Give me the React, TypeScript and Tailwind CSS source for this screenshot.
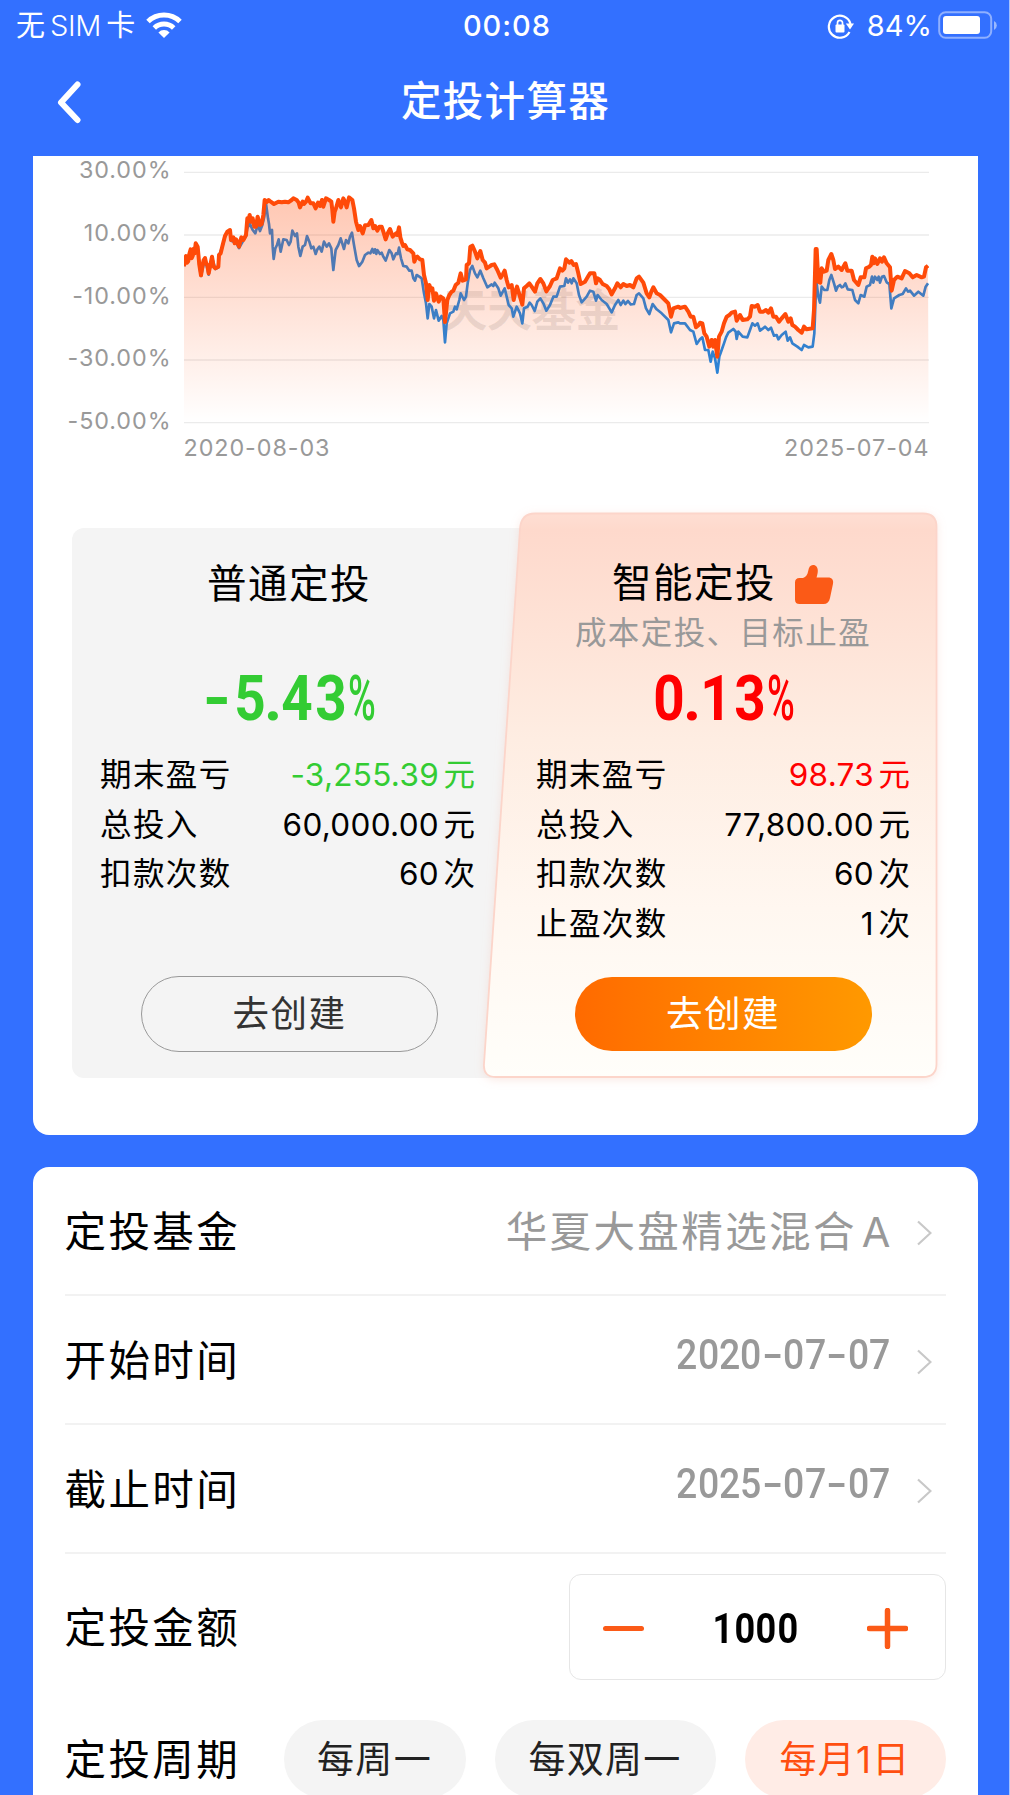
import React from 'react';

type Segment = { dx: number; points: string };

const GRID_LINES = [67, 255, 442, 630, 818];
const Y_LABELS = ['30.00%', '10.00%', '-10.00%', '-30.00%', '-50.00%'];

const SMART_LINE: Segment[] = [
  {
    dx: -462,
    points:
      '462,349 465,325 468,318 471,338 475,333 478,312 482,298 485,325 488,318 491,296 494,310 497,280 503,290 508,345 513,376 518,345 521,330 525,324 529,342 532,345 536,370 541,345 546,320 551,350 556,355 565,350 567,315 572,310 578,285 585,258 592,245 600,240 603,270 610,262 614,280 618,268 622,275 627,290 634,262 640,270 648,255 652,205 655,215 659,195 663,215 668,205 673,230 678,230 683,200 690,225 695,222 700,195 704,150 710,156 716,150 722,155 732,162 745,155 755,157 765,155 775,157 785,150 790,145 800,150 806,158 810,172 818,155 822,162 828,155 833,143 842,160 850,160 857,175 864,158 870,168 876,150 880,170 888,145 897,150 904,155 907,180 910,215 914,185 918,175 925,150 933,172 940,145 945,155 950,172 957,142 967,150 972,175 978,215 985,240',
  },
  {
    dx: 528,
    points:
      '0,228 8,250 15,226 25,225 34,210 40,235 45,228 52,242 58,230 65,230 70,245 77,268 84,248 90,237 98,260 108,250 112,255 117,232 121,262 125,275 130,288 135,285 142,298 150,300 160,310 163,335 167,325 172,320 180,328 187,330 192,375 198,400 203,450 208,405 213,420 217,415 222,452 228,430 236,455 242,440 250,445 255,516 262,450 268,435 275,425 280,422 287,405 295,398 302,370 308,392 318,388 320,345 327,340 331,290 337,287 345,305 352,325 357,312 361,303 368,330 375,338 380,355 388,350 395,345 403,343 412,360 422,383 429,372 434,362 440,390 446,412 455,405 461,450 466,425 471,410 480,440 487,464 492,415 500,408 508,400 515,410 525,425 532,400 541,387 550,400 559,424 570,408 578,390 590,385 600,355 607,362 613,355 618,328 628,338 634,333 641,345 648,342 655,370 662,402 675,395 685,378 690,370 703,370 708,400 713,385 720,390 728,402 740,408 748,418 755,433 765,415 772,400 782,412 790,402 800,408 810,405 820,412 830,385 837,380 850,398 860,430 868,442 874,425 880,412 890,430 900,435 915,450 925,460 933,500 940,475 955,470',
  },
  {
    dx: 1428,
    points:
      '60,474 75,470 85,485 92,500 100,500 108,532 116,525 120,518 127,520 133,550 140,560 148,590 155,570 160,590 165,570 172,620 177,560 185,545 192,520 200,500 207,496 215,488 225,485 230,512 240,495 248,510 262,508 270,500 275,468 285,470 293,465 300,485 310,485 318,480 325,488 333,475 340,500 348,500 357,515 365,505 376,492 385,515 392,505 397,525 405,530 415,540 425,548 432,530 440,538 458,535 462,480 467,297 470,297 475,395 481,398 485,355 492,365 500,362 505,330 514,312 520,330 525,357 535,350 545,360 556,340 562,362 575,362 582,390 595,405 602,382 613,382 618,355 628,350 633,345 637,320 641,340 645,325 652,342 660,325 666,335 672,322 680,340 690,352 695,422 702,390 712,380 725,385 735,363 748,370 758,382 770,375 785,382 792,380 798,352 804,347',
  },
];

const NORMAL_LINE: Segment[] = [
  {
    dx: -462,
    points:
      '462,349 468,320 475,335 482,300 488,320 497,283 503,292 508,347 513,378 525,326 536,374 546,322 556,357 565,352 567,317 578,287 585,260 592,247 600,242 603,272 618,278 627,294 640,272 648,258 652,235 659,220 668,240 676,250 683,225 690,243 697,225 703,200 708,160 714,205 717,222 720,250 726,240 728,290 731,327 736,295 741,285 746,268 752,305 760,268 770,270 777,285 782,275 787,242 795,258 801,250 805,290 811,318 818,290 825,285 831,258 838,275 844,295 850,290 857,312 862,298 868,290 875,305 882,275 890,290 897,280 904,295 907,330 910,360 914,325 917,300 925,285 932,265 942,297 948,270 955,280 960,260 966,248 972,285 980,330 987,348',
  },
  {
    dx: 528,
    points:
      '0,345 7,335 15,315 25,308 31,310 37,297 41,308 45,298 49,312 52,300 60,312 65,308 70,320 77,332 88,300 95,310 100,328 108,310 113,312 117,293 123,325 130,348 140,350 148,362 155,362 160,385 165,392 170,375 178,380 185,385 192,430 198,460 203,505 208,462 215,470 222,505 228,480 236,512 245,498 250,510 255,577 260,520 270,490 280,485 285,470 290,478 298,450 302,430 312,450 318,440 323,400 330,360 337,348 345,370 352,382 361,362 370,385 382,412 395,403 400,408 404,398 415,415 422,437 434,415 440,440 446,465 455,475 460,500 470,470 480,490 487,520 492,475 503,470 509,458 515,465 524,483 532,455 541,445 550,460 559,482 570,465 580,440 590,440 600,410 613,408 618,385 624,398 630,388 635,400 640,385 650,400 657,435 665,457 680,440 690,422 700,425 708,452 713,435 725,450 740,462 755,487 765,465 775,450 782,465 790,452 796,462 804,453 812,463 822,462 830,435 837,430 850,445 858,475 868,492 878,462 890,478 905,490 925,510 933,547 942,520 955,517',
  },
  {
    dx: 1428,
    points:
      '60,520 75,520 90,540 100,545 110,582 120,568 127,562 135,600 145,600 152,635 158,605 165,625 172,668 178,620 185,600 192,580 198,562 205,548 220,537 227,545 230,567 235,545 248,560 262,562 270,540 277,520 285,527 293,520 300,542 308,536 315,530 325,540 333,533 342,557 350,555 355,568 365,555 377,545 383,572 390,562 397,580 412,590 425,600 432,585 445,592 458,590 463,550 467,440 470,400 475,440 480,458 485,410 493,420 502,420 508,390 514,375 522,400 528,422 533,410 540,405 545,412 550,410 556,400 563,418 577,420 585,450 595,460 602,435 613,440 620,410 630,405 636,380 640,398 645,380 652,390 656,380 660,398 666,380 672,378 680,397 688,402 694,475 702,445 718,435 728,432 738,415 744,425 750,422 762,437 775,425 790,437 797,410 804,400',
  },
];

function linePath(segments: Segment[]) {
  return segments
    .flatMap(({ dx, points }) =>
      points.split(' ').map((pair) => {
        const [x, y] = pair.split(',').map(Number);
        return `${x + dx} ${y}`;
      }),
    )
    .join(' L');
}

function StatusBar() {
  return (
    <div className="flex h-[51px] items-center justify-between pt-[1px] pr-[11px] pl-[16px] text-[29px]">
      <div className="flex w-[300px] items-center">
        <span>
          无<span className="mx-[5px] font-light tracking-[-0.3px]">SIM</span>卡
        </span>
        <svg className="mb-[3px] ml-[10px] h-[28px] w-[38px]" viewBox="0 0 38 28">
          <path
            d="M3 10.5a23 23 0 0 1 32 0M9.3 17a14 14 0 0 1 19.4 0"
            fill="none"
            stroke="#fff"
            strokeWidth="5"
          />
          <path d="M19 27l-5.6-5.6a8 8 0 0 1 11.2 0z" fill="#fff" />
        </svg>
      </div>
      <span className="font-medium tracking-[1px]">00:08</span>
      <div className="flex w-[300px] items-center justify-end">
        <svg className="mr-[12px] h-[26px] w-[28px]" viewBox="0 0 28 26">
          <path
            d="M22.5 19a11 11 0 1 1 1-8"
            fill="none"
            stroke="#fff"
            strokeWidth="2.2"
          />
          <path d="M18.8 10.5h8.2l-4 6z" fill="#fff" />
          <rect x="8.5" y="11.5" width="9" height="8" rx="1" fill="#fff" />
          <path
            d="M10.5 12V9.8a2.5 2.5 0 0 1 5 0V12"
            fill="none"
            stroke="#fff"
            strokeWidth="1.7"
          />
        </svg>
        <span>84%</span>
        <svg className="mb-[2px] ml-[6px] h-[28px] w-[60px]" viewBox="0 0 60 28">
          <rect
            x="1.2"
            y="1.2"
            width="52"
            height="25.6"
            rx="6.5"
            fill="none"
            stroke="#fff"
            strokeOpacity=".45"
            strokeWidth="2"
          />
          <path d="M56 10a5 5 0 0 1 0 9z" fill="#fff" fillOpacity=".5" />
          <rect x="5" y="5" width="37" height="18" rx="3" fill="#fff" />
        </svg>
      </div>
    </div>
  );
}

function Header() {
  return (
    <header className="flex h-[105px] items-center px-[55px] pb-[3px]">
      <svg className="h-[44px] w-[28px]" viewBox="0 0 28 44">
        <path
          d="M22.5 4.5L6 22.5l16.5 17.5"
          fill="none"
          stroke="#fff"
          strokeWidth="6"
          strokeLinecap="round"
          strokeLinejoin="round"
        />
      </svg>
      <h1 className="flex-1 pr-[26px] text-center text-[40.5px] font-medium tracking-[1.3px]">
        定投计算器
      </h1>
    </header>
  );
}

function YieldChart() {
  const smart = linePath(SMART_LINE);
  const normal = linePath(NORMAL_LINE);

  return (
    <div className="h-[356px] text-[23.3px] leading-6 tracking-[0.95px] text-[#999]">
      <div className="flex gap-[12px]">
        <div className="mt-[2px] flex h-[275px] w-[139px] flex-col justify-between text-right">
          {Y_LABELS.map((label) => (
            <span key={label}>{label}</span>
          ))}
        </div>
        <svg className="h-[277px] w-[745px]" viewBox="0 18 2235 831">
          <defs>
            <linearGradient
              id="area"
              x1="0"
              y1="140"
              x2="0"
              y2="818"
              gradientUnits="userSpaceOnUse"
            >
              <stop offset="0" stopColor="#ff4a08" stopOpacity=".31" />
              <stop offset="1" stopColor="#ff4a08" stopOpacity="0" />
            </linearGradient>
          </defs>
          {GRID_LINES.map((y) => (
            <path key={y} d={`M0 ${y}H2235`} stroke="#ebebeb" strokeWidth="4" />
          ))}
          <text
            x="775"
            y="532"
            fontSize="136"
            fontWeight="700"
            fill="#000"
            fillOpacity=".09"
            textLength="536"
          >
            天天基金
          </text>
          <path
            d={`M${normal}`}
            fill="none"
            stroke="#1b87e6"
            strokeWidth="8"
            strokeLinejoin="round"
          />
          <path d={`M${smart} L2234 818 L0 818Z`} fill="url(#area)" />
          <path
            d={`M${smart}`}
            fill="none"
            stroke="#ff4a08"
            strokeWidth="12"
            strokeLinejoin="round"
          />
        </svg>
      </div>
      <div className="mt-[3px] flex justify-between pr-[48px] pl-[151px]">
        <span>2020-08-03</span>
        <span>2025-07-04</span>
      </div>
    </div>
  );
}

const CELLS: Record<string, string> = {
  '-': 'w-[0.48em] scale-x-[1.15]',
  '.': 'w-[0.21em]',
  '%': 'w-[0.44em] scale-x-[0.6] font-medium',
};

function Percent({ value, className }: { value: string; className: string }) {
  return (
    <p
      className={`flex h-[80px] items-center justify-center pt-[3px] font-[Roboto] text-[63px] font-bold ${className}`}
    >
      {value.split('').map((char, i) => (
        <span
          key={i}
          className={`flex justify-center ${CELLS[char] ?? 'w-[0.54em] scale-x-[0.87]'}`}
        >
          {char}
        </span>
      ))}
    </p>
  );
}

function Row({
  label,
  value,
  unit,
  className = '',
}: {
  label: string;
  value: string;
  unit: string;
  className?: string;
}) {
  return (
    <div className="flex h-[49.5px] items-center justify-between text-[31.5px]">
      <span className="tracking-[1.4px]">{label}</span>
      <span className={className}>
        <span className="mr-[4.500px] tracking-[0.3px]">{value}</span>
        {unit}
      </span>
    </div>
  );
}

function ThumbIcon() {
  return (
    <svg className="h-[41px] w-[40px]" viewBox="0 0 40 41">
      <path
        d="M5.500 14H9c3-.8 4.600-3.500 5.200-7C14.800 3 16.300 1 19 1c3.200 0 5 2.700 4.800 6-.1 2.700-.7 4.800-1.300 6.500H34c4 0 5.800 2.500 5 6.300L36 34c-.9 4-2.900 6-6.500 6H5.500C2.500 40 1 38.500 1 35.500v-17C1 15.500 2.500 14 5.500 14z"
        fill="#fb5a17"
      />
    </svg>
  );
}

function Comparison() {
  return (
    <div className="ml-[39.5px] flex text-black">
      <article className="mt-[15.500px] -mr-[26px] h-[550px] w-[460px] rounded-xl bg-[#f4f4f4] pt-[32.500px] pr-[57px] pl-[28px]">
        <h2 className="h-[48px] pl-[3px] text-center text-[39.5px] leading-[48px] tracking-[1.5px]">
          普通定投
        </h2>
        <Percent value="-5.43%" className="mt-[50px] pl-[3px] text-[#33cc33]" />
        <div className="mt-[12px] h-[198px]">
          <Row
            label="期末盈亏"
            value="-3,255.39"
            unit="元"
            className="text-[#33cc33]"
          />
          <Row label="总投入" value="60,000.00" unit="元" />
          <Row label="扣款次数" value="60" unit="次" />
        </div>
        <button className="mx-auto mt-[28px] ml-[41px] flex h-[76px] w-[297px] items-center justify-center rounded-full border border-[#999] text-[36.5px] tracking-[1.5px] text-[#333]">
          去创建
        </button>
      </article>
      <article className="relative w-[432px] pt-[48px] pr-[28px] pl-[30px]">
        <svg
          className="absolute top-[-12px] left-[-35px] h-[592px] w-[480px]"
          viewBox="0 0 480 592"
        >
          <defs>
            <linearGradient id="panel" x1="0" y1="0" x2="0" y2="1">
              <stop offset="0" stopColor="#feded3" />
              <stop offset=".03" stopColor="#fed9cc" />
              <stop offset=".4" stopColor="#feede2" />
              <stop offset=".7" stopColor="#fff7f0" />
              <stop offset="1" stopColor="#fffefa" />
            </linearGradient>
            <filter id="panelShadow" x="-5%" y="-5%" width="110%" height="110%">
              <feDropShadow
                dx="0"
                dy="2"
                stdDeviation="4"
                floodColor="#f0b8a8"
                floodOpacity=".3"
              />
            </filter>
          </defs>
          <path
            d="M64 13.500H452Q465.500 13.500 465.500 27V564Q465.500 577 452 577H25Q12 577 13 564L49 29Q50 13.500 64 13.500Z"
            fill="url(#panel)"
            stroke="#fcd5ca"
            strokeWidth="1.800"
            filter="url(#panelShadow)"
          />
        </svg>
        <div className="relative">
          <h2 className="flex h-[48px] items-center justify-center gap-[18px] text-[39.5px] tracking-[1.5px]">
            智能定投
            <ThumbIcon />
          </h2>
          <p className="h-[50px] text-center text-[31.5px] leading-[50px] tracking-[1.4px] text-[#999]">
            成本定投、目标止盈
          </p>
          <Percent value="0.13%" className="text-[#ff0000]" />
          <div className="mt-[12px] h-[198px]">
            <Row
              label="期末盈亏"
              value="98.73"
              unit="元"
              className="text-[#ff0000]"
            />
            <Row label="总投入" value="77,800.00" unit="元" />
            <Row label="扣款次数" value="60" unit="次" />
            <Row label="止盈次数" value="1" unit="次" />
          </div>
          <button className="mx-auto mt-[29px] flex h-[74px] w-[297px] items-center justify-center rounded-full bg-linear-to-r from-[#ff6a00] to-[#ff9900] text-[36.5px] tracking-[1.5px] text-white">
            去创建
          </button>
        </div>
      </article>
    </div>
  );
}

function DateValue({ value }: { value: string }) {
  return (
    <span className="mb-[14px] flex font-[Roboto] text-[43px] font-medium">
      {value.split('').map((char, i) => (
        <span
          key={i}
          className={`flex w-[21.450px] justify-center ${char === '-' ? 'scale-x-[1.4]' : 'scale-x-[0.87]'}`}
        >
          {char}
        </span>
      ))}
    </span>
  );
}

function FormRow({
  label,
  children,
}: {
  label: string;
  children: React.ReactNode;
}) {
  return (
    <div className="flex h-[129.300px] items-center border-b-2 border-[#f2f2f2] pt-[3px] text-[41.5px]">
      <span className="flex-1 tracking-[2.400px]">{label}</span>
      <span className="text-[#999]">{children}</span>
      <svg className="mt-[2px] mr-[14px] ml-[26px] h-[26px] w-[15px]" viewBox="0 0 15 26">
        <path d="M1 1.500l12.500 11.500L1 24.500" fill="none" stroke="#c8c8c8" strokeWidth="2.200" />
      </svg>
    </div>
  );
}

function Pill({ text, className }: { text: string; className: string }) {
  return (
    <button
      className={`h-[78px] rounded-full pt-[1px] text-[37px] tracking-[1.300px] ${className}`}
    >
      {text}
    </button>
  );
}

export default function App() {
  return (
    <div className="h-[1795px] w-[1010px] overflow-hidden border-r border-[#a5c3ff] bg-[#3370ff] font-[Inter,'Noto_Sans_CJK_SC',sans-serif] text-white">
      <StatusBar />
      <Header />
      <section className="mx-[32.500px] h-[979px] w-[945px] rounded-b-2xl bg-white">
        <YieldChart />
        <Comparison />
      </section>
      <section className="mx-[32.500px] mt-[31.500px] h-[700px] w-[945px] rounded-t-2xl bg-white px-[32px] text-black">
        <FormRow label="定投基金">
          <span className="tracking-[2.400px]">华夏大盘精选混合</span>
          <span className="ml-[5px]">A</span>
        </FormRow>
        <FormRow label="开始时间">
          <DateValue value="2020-07-07" />
        </FormRow>
        <FormRow label="截止时间">
          <DateValue value="2025-07-07" />
        </FormRow>
        <div className="mt-[20px] flex h-[106px] items-center justify-between text-[41.5px]">
          <span className="pt-[1px] tracking-[2.400px]">定投金额</span>
          <div className="flex h-full w-[377px] items-center justify-between rounded-xl border-[1.500px] border-[#e6e6e6] px-[33px] pt-[2px]">
            <span className="h-[5.500px] w-[41px] rounded-full bg-[#fb5a17]" />
            <span className="flex font-[Roboto] text-[43px] font-bold">
              {'1000'.split('').map((char, i) => (
                <span
                  key={i}
                  className="flex w-[21.500px] scale-x-[0.84] justify-center"
                >
                  {char}
                </span>
              ))}
            </span>
            <svg className="mr-[4px] h-[41px] w-[41px]" viewBox="0 0 41 41">
              <path
                d="M2.500 20.500h36M20.500 2.500v36"
                stroke="#fb5a17"
                strokeWidth="5.500"
                strokeLinecap="round"
              />
            </svg>
          </div>
        </div>
        <div className="mt-[39.500px] flex items-center gap-[29px] text-[41.5px]">
          <span className="flex-1 pt-[2px] tracking-[2.400px] whitespace-nowrap">
            定投周期
          </span>
          <Pill text="每周一" className="w-[182px] bg-[#f4f4f4] text-[#222]" />
          <Pill text="每双周一" className="w-[221px] bg-[#f4f4f4] text-[#222]" />
          <Pill text="每月1日" className="w-[201px] bg-[#ffece6] text-[#ff4f10]" />
        </div>
      </section>
    </div>
  );
}
